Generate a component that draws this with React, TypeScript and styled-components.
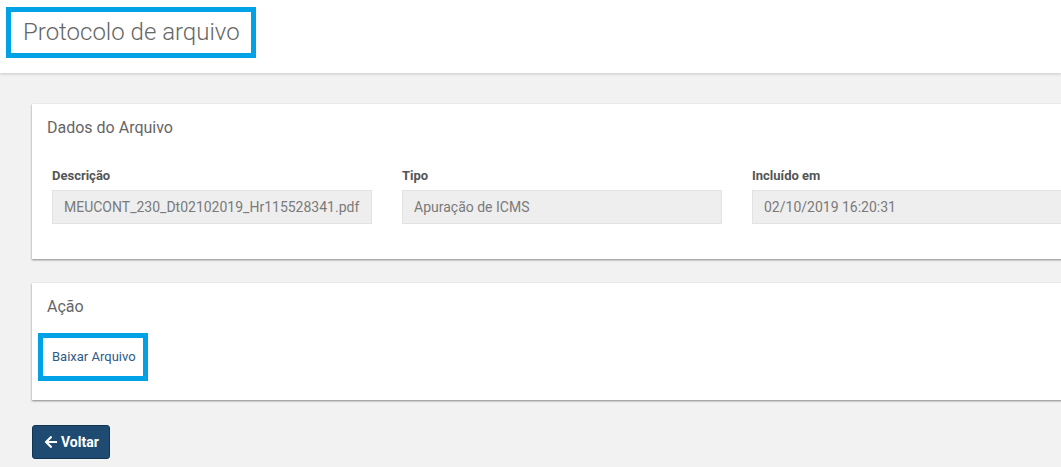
import React from "react"
import styled, { createGlobalStyle } from "styled-components"
import { FaArrowLeft } from "react-icons/fa"

const GlobalStyle = createGlobalStyle`
    html, body {
        margin: 0;
        padding: 0;
        background: #f2f2f2;
        font-family: Roboto, "Liberation Sans", Arial, sans-serif;
        overflow: hidden;
    }
`

const Header = styled.header`
    height: 73px;
    background: #fff;
    box-shadow: 0 1px 3px rgba(0, 0, 0, 0.18);
    padding: 7px 0 0 6px;
    box-sizing: border-box;
    position: relative;
    z-index: 1;
`

const Highlight = styled.div`
    display: inline-block;
    border: 5px solid #00a2e6;
    box-sizing: border-box;
`

const TitleBox = styled(Highlight)`
    width: 250px;
    height: 51px;
    padding: 6px 0 0 12px;
`

const PageTitle = styled.h1`
    margin: 0;
    font-size: 24px;
    font-weight: 300;
    color: #666;
    line-height: 29px;
    white-space: nowrap;
`

const Content = styled.main`
    padding: 31px 0 0 32px;
    overflow: hidden;
`

const Card = styled.section`
    width: 1100px;
    background: #fff;
    box-shadow: 0 1px 2px rgba(0, 0, 0, 0.45);
    margin-bottom: 24px;
`

const CardHeader = styled.div`
    padding: 15px 15px 0;
    font-size: 16px;
    color: #666;
    line-height: 18px;
`

const Row = styled.div`
    display: flex;
    padding: 31px 5px 35px;
`

const Field = styled.div`
    width: 320px;
    padding: 0 15px;
`

const Label = styled.label`
    display: block;
    font-size: 13px;
    font-weight: 700;
    color: #555;
    line-height: 15px;
    margin-bottom: 7px;
`

const Input = styled.div`
    height: 34px;
    box-sizing: border-box;
    background: #eee;
    border: 1px solid #e2e2e2;
    padding: 0 11px;
    font-size: 14px;
    color: #7a7a7a;
    line-height: 32px;
    white-space: nowrap;
    overflow: hidden;
`

const ActionBody = styled.div`
    padding: 17px 0 19px 6px;
`

const LinkBox = styled(Highlight)`
    width: 110px;
    height: 48px;
    padding: 0 0 0 9px;
`

const DownloadLink = styled.a`
    font-size: 13px;
    color: #2d5a86;
    line-height: 38px;
    text-decoration: none;
    cursor: pointer;
`

const BackButton = styled.button`
    display: inline-flex;
    align-items: center;
    gap: 3px;
    height: 34px;
    width: 78px;
    padding: 0 0 0 11px;
    box-sizing: border-box;
    background: #1f4b72;
    border: 1px solid #123552;
    border-radius: 3px;
    color: #fff;
    font-family: Roboto, "Liberation Sans", Arial, sans-serif;
    font-size: 14px;
    font-weight: 700;
    margin-top: 1px;
    cursor: pointer;
`

export default function App() {
    const fields = [
        { label: "Descrição", value: "MEUCONT_230_Dt02102019_Hr115528341.pdf" },
        { label: "Tipo", value: "Apuração de ICMS" },
        { label: "Incluído em", value: "02/10/2019 16:20:31" },
    ]

    return (
        <>
            <GlobalStyle />
            <Header>
                <TitleBox>
                    <PageTitle>Protocolo de arquivo</PageTitle>
                </TitleBox>
            </Header>
            <Content>
                <Card>
                    <CardHeader>Dados do Arquivo</CardHeader>
                    <Row>
                        {fields.map((f) => (
                            <Field key={f.label}>
                                <Label>{f.label}</Label>
                                <Input>{f.value}</Input>
                            </Field>
                        ))}
                    </Row>
                </Card>
                <Card>
                    <CardHeader>Ação</CardHeader>
                    <ActionBody>
                        <LinkBox>
                            <DownloadLink>Baixar Arquivo</DownloadLink>
                        </LinkBox>
                    </ActionBody>
                </Card>
                <BackButton>
                    <FaArrowLeft size={14} />
                    Voltar
                </BackButton>
            </Content>
        </>
    )
}
